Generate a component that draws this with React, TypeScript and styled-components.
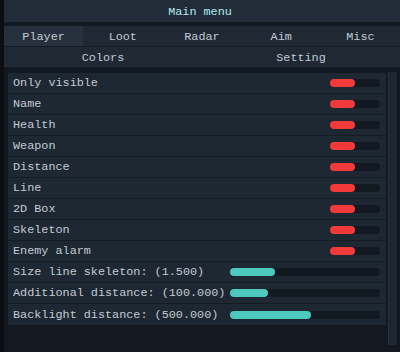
import styled, { createGlobalStyle } from "styled-components";

const GlobalStyle = createGlobalStyle`
  html, body {
    margin: 0;
    padding: 0;
    background: #0b0f14;
  }
  * {
    box-sizing: border-box;
  }
`;

const MAIN_TABS = ["Player", "Loot", "Radar", "Aim", "Misc"];
const SUB_TABS = ["Colors", "Setting"];

const TOGGLES = [
  "Only visible",
  "Name",
  "Health",
  "Weapon",
  "Distance",
  "Line",
  "2D Box",
  "Skeleton",
  "Enemy alarm",
];

const SLIDERS = [
  { label: "Size line skeleton: (1.500)", value: 0.3 },
  { label: "Additional distance: (100.000)", value: 0.25 },
  { label: "Backlight distance: (500.000)", value: 0.54 },
];

const App = () => {
  return (
    <>
      <GlobalStyle />
      <Window>
        <TitleBar>Main menu</TitleBar>
        <TabRow $cols={5}>
          {MAIN_TABS.map((t, i) => (
            <Tab key={t} $active={i === 0}>
              {t}
            </Tab>
          ))}
        </TabRow>
        <TabRow $cols={2}>
          {SUB_TABS.map((t) => (
            <Tab key={t}>{t}</Tab>
          ))}
        </TabRow>
        <Body>
          <Panel>
            {TOGGLES.map((label) => (
              <Row key={label}>
                <Label>{label}</Label>
                <Toggle>
                  <ToggleKnob />
                </Toggle>
              </Row>
            ))}
            {SLIDERS.map((s) => (
              <Row key={s.label}>
                <Label>{s.label}</Label>
                <SliderTrack>
                  <SliderFill style={{ width: `${s.value * 100}%` }} />
                </SliderTrack>
              </Row>
            ))}
          </Panel>
          <Scrollbar />
        </Body>
      </Window>
    </>
  );
};

export default App;

const Window = styled.div`
  height: 352px;
  margin-left: 4px;
  width: 396px;
  background: #131a22;
  display: flex;
  flex-direction: column;
  font-family: "Liberation Mono", "DejaVu Sans Mono", monospace;
  font-size: 11.8px;
  color: #c2cad2;
  overflow: hidden;
`;

const TitleBar = styled.div`
  height: 22px;
  background: #212c38;
  color: #b4eaf2;
  display: flex;
  align-items: center;
  justify-content: center;
  padding: 2px 4px 0 0;
  margin-bottom: 4px;
`;

const TabRow = styled.div<{ $cols: number }>`
  display: grid;
  grid-template-columns: repeat(${(p) => p.$cols}, 1fr);
  height: 21px;
  background: #1f2833;
  border-bottom: 1px solid #151c24;
`;

const Tab = styled.div<{ $active?: boolean }>`
  display: flex;
  align-items: center;
  justify-content: center;
  padding-top: 1px;
  background: ${(p) => (p.$active ? "#26313d" : "transparent")};
`;

const Body = styled.div`
  flex: 1;
  display: flex;
  gap: 2px;
  padding: 5px 3px 7px 4px;
  background: #121920;
`;

const Panel = styled.div`
  flex: 1;
  align-self: flex-start;
  background: #1e2832;
  display: flex;
  flex-direction: column;
`;

const Row = styled.div`
  height: 21px;
  display: flex;
  align-items: center;
  justify-content: space-between;
  padding: 0 6px 0 5px;
  border-bottom: 1px solid #141b22;
  &:last-child {
    border-bottom: none;
  }
`;

const Label = styled.span`
  white-space: nowrap;
`;

const Toggle = styled.div`
  width: 50px;
  height: 8px;
  border-radius: 4px;
  background: #121920;
  display: flex;
`;

const ToggleKnob = styled.div`
  width: 25px;
  height: 100%;
  border-radius: 4px;
  background: #f23a3a;
`;

const SliderTrack = styled.div`
  width: 150px;
  height: 8px;
  border-radius: 4px;
  background: #121920;
  display: flex;
`;

const SliderFill = styled.div`
  height: 100%;
  border-radius: 4px;
  background: #4ec9bd;
`;

const Scrollbar = styled.div`
  width: 9px;
  margin-top: -1px;
  background: #1d2731;
  border-left: 1px solid #27323e;
`;
